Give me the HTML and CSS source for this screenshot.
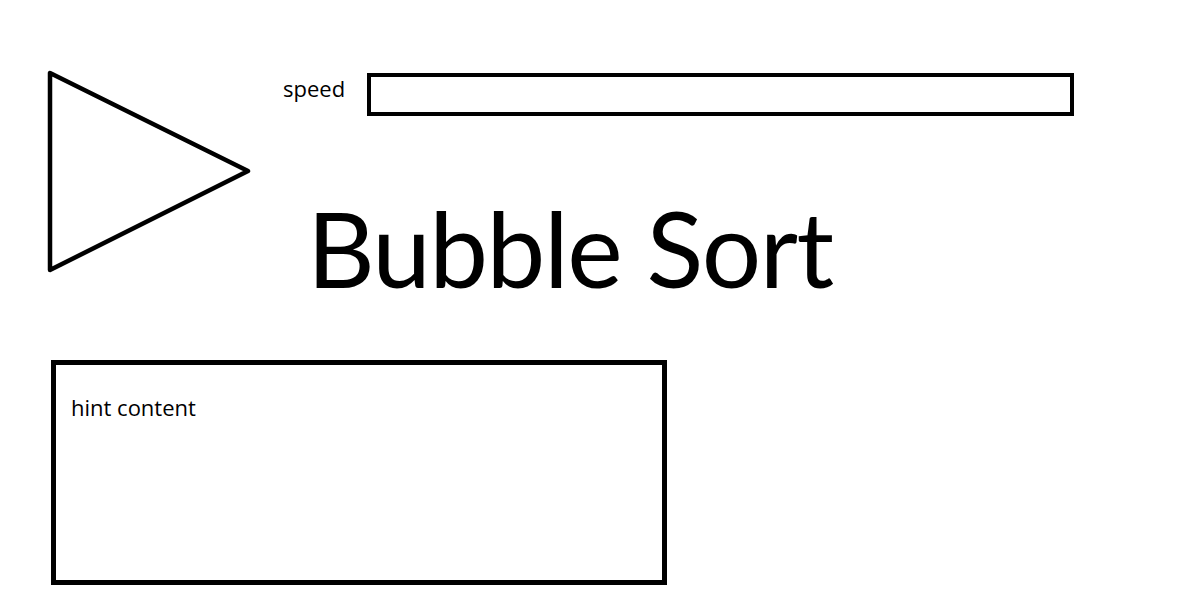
FILE: index.html
```html
<!DOCTYPE html>
<html lang="en">
<head>
<meta charset="utf-8">
<title>Bubble Sort</title>
<link rel="stylesheet" href="styles.css">
</head>
<body>
<main class="app">
  <div class="top">
    <button class="play" aria-label="play">
      <svg width="206" height="204" viewBox="0 0 206 204"><polygon points="4,3 4,200 202,101" fill="none" stroke="#000" stroke-width="4.5" stroke-linejoin="round"/></svg>
    </button>
    <div class="side">
      <div class="speed-row">
        <span class="speed-label">speed</span>
        <div class="speed-bar"></div>
      </div>
      <h1 class="title">Bubble Sort</h1>
    </div>
  </div>
  <div class="hint">hint content</div>
</main>
</body>
</html>
```
FILE: styles.css
```css
html, body {
  margin: 0;
  background: #fff;
}
body {
  font-family: "Open Sans", "Noto Sans", sans-serif;
  color: #000;
}
.app {
  display: flex;
  flex-direction: column;
  width: 1200px;
  height: 600px;
}
.top {
  display: flex;
  padding: 70px 0 0 46px;
}
.play {
  display: block;
  padding: 0;
  margin: 0;
  border: 0;
  background: none;
  width: 206px;
  height: 204px;
}
.play svg {
  display: block;
}
.side {
  display: flex;
  flex-direction: column;
  margin-left: 31px;
}
.speed-row {
  display: flex;
  align-items: flex-start;
  margin-top: 3px;
}
.speed-label {
  font-size: 22px;
  line-height: 28px;
  margin-top: 1px;
  width: 84px;
}
.speed-bar {
  box-sizing: border-box;
  width: 707px;
  height: 43px;
  border: 4px solid #000;
}
.title {
  margin: 71px 0 0 24px;
  font-family: "Lato", "Open Sans", sans-serif;
  font-size: 105px;
  font-weight: 400;
  letter-spacing: -1.5px;
  line-height: 120px;
}
.hint {
  box-sizing: border-box;
  margin: 53px 0 0 51px;
  width: 616px;
  height: 225px;
  border: 5px solid #000;
  padding: 28px 15px;
  font-size: 22px;
  line-height: 28px;
}
```
